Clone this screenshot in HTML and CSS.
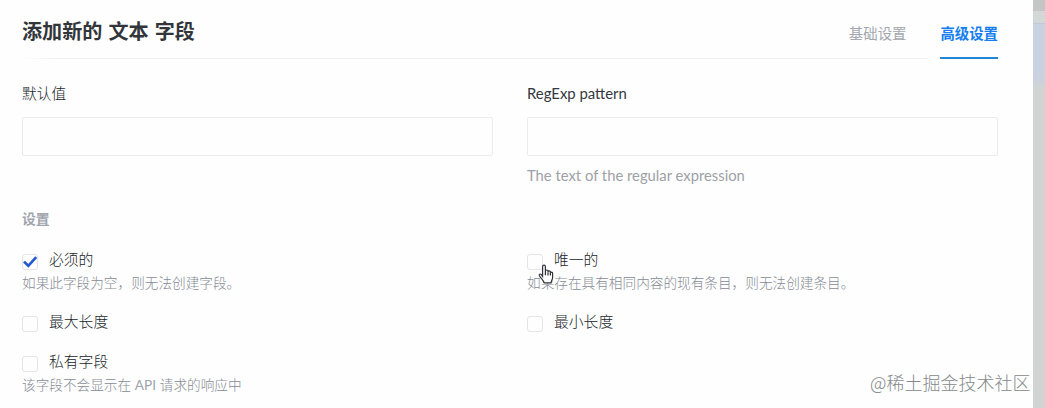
FILE: index.html
```
<!DOCTYPE html>
<html lang="zh-CN">
<head>
    <meta charset="utf-8">
    <title>添加新的 文本 字段</title>
    <link rel="stylesheet" href="styles.css">
</head>
<body>
    <div class="modal">
        <header class="modal-header">
            <h1>添加新的 文本 字段</h1>
            <nav class="tabs">
                <a class="tab">基础设置</a>
                <a class="tab active">高级设置</a>
            </nav>
        </header>

        <form class="fields">
            <div class="field">
                <label for="default" class="cn">默认值</label>
                <input type="text" id="default" autocomplete="off">
            </div>
            <div class="field">
                <label for="regex">RegExp pattern</label>
                <input type="text" id="regex" autocomplete="off">
                <p class="hint">The text of the regular expression</p>
            </div>
        </form>

        <h2>设置</h2>

        <div class="options">
            <div class="option">
                <label><span class="box"><svg viewBox="0 0 16 16"><path d="M2 7.6 L6.3 11.8 L14.2 3.2"/></svg></span><span class="name">必须的</span></label>
                <p>如果此字段为空，则无法创建字段。</p>
            </div>
            <div class="option">
                <label>
                    <span class="box">
                        <svg class="cursor" viewBox="0 0 16 20"><path d="M4.6 12.4V2.5a1.4 1.4 0 0 1 2.8 0V8.1V7.3a1.3 1.3 0 0 1 2.6 0V8.6V8a1.2 1.2 0 0 1 2.4 0V9.3a1.1 1.1 0 0 1 2.2 0V13.5c0 2-1.3 3-1.5 5.4H6.2C5.7 16.4 3 14.6 1.4 11.7c-.6-1.3.8-2.2 1.8-1.3z"/><path d="M7.4 8v3.3M10 8.4v3M12.4 9v2.4"/></svg>
                    </span>
                    <span class="name">唯一的</span>
                </label>
                <p>如果存在具有相同内容的现有条目，则无法创建条目。</p>
            </div>
            <div class="option">
                <label><span class="box"></span><span class="name">最大长度</span></label>
            </div>
            <div class="option">
                <label><span class="box"></span><span class="name">最小长度</span></label>
            </div>
            <div class="option">
                <label><span class="box"></span><span class="name">私有字段</span></label>
                <p>该字段不会显示在 <span class="latin">API</span> 请求的响应中</p>
            </div>
        </div>
    </div>
    <div class="backdrop"></div>
    <div class="watermark">@稀土掘金技术社区</div>
</body>
</html>
```

FILE: styles.css
```
* {box-sizing: border-box;}
body {
    display: flex;
    height: 408px;
    margin: 0;
    overflow: hidden;
    background: #fdfefd;
    color: #333740;
    font-family: Lato, "Noto Sans CJK SC", sans-serif;
}
h1, h2, p {margin: 0;}

/* Modal */
.modal {width: 1033px;padding: 0 35px 0 22px;}
.modal-header {display: flex;justify-content: space-between;height: 59px;background: linear-gradient(90deg, transparent, #f0f1f1 30px 905px, transparent 908px 914px, #f0f1f1 917px) bottom / 100% 1px no-repeat;}
h1 {margin-top: 16px;font-size: 20.1px;line-height: 30px;font-weight: 700;word-spacing: 1.2px;color: #32363a;}
.tabs {display: flex;gap: 34px;}
.tab {height: 59px;padding-top: 24px;font-size: 14.4px;line-height: 20px;color: #a3a7af;}
.tab.active {color: #167ef0;font-weight: 700;border-bottom: 2px solid #2585d5;}

/* Inputs */
.fields {display: grid;grid-template-columns: 1fr 1fr;gap: 34px;height: 149px;padding-top: 23px;}
.field label {display: block;height: 35px;font-size: 14.9px;line-height: 22px;}
.field .cn {font-size: 14.7px;font-weight: 300;color: #20242a;}
.field input {display: block;width: 100%;height: 39px;border: 1px solid #e9ebec;border-radius: 2px;background: #fdfefd;outline: none;}
.hint {margin-top: 8px;font-size: 14.8px;line-height: 22px;color: #9da1a8;}

h2 {margin-top: 1px;font-size: 13.8px;line-height: 20px;font-weight: 700;color: #a0a4ad;}

/* Checkboxes */
.options {display: grid;grid-template-columns: 1fr 1fr;grid-template-rows: 62px 40px 50px;column-gap: 34px;margin-top: 19px;}
.option label {display: flex;gap: 11px;height: 24px;}
.box {position: relative;width: 16px;height: 16px;margin-top: 6px;border: 1px solid #e3e5e6;border-radius: 3px;}
.box svg {display: block;width: 16px;height: 16px;margin: -1px;fill: none;stroke: #2459cf;stroke-width: 2.7;}
.box .cursor {position: absolute;z-index: 1;left: 10px;top: 9px;width: 16px;height: 20px;margin: 0;fill: #fff;stroke: #30343a;stroke-width: 1.2;}
.name {font-size: 14.8px;line-height: 22px;font-weight: 300;color: #20242a;}
.option p {font-size: 13.65px;line-height: 22px;font-weight: 300;color: #868b95;}
.latin {font-weight: 400;color: #a0a4ad;}

/* Page behind the modal */
.backdrop {width: 12px;background: linear-gradient(#c4c6c5 0 11px, #d4d7d7 11px 23px, #bdc8d9 23px 24px, #c8d2e1 24px 75px, #d2d4d3 90px);}
.watermark {position: absolute;left: 870px;top: 370px;font-size: 18px;line-height: 24px;font-weight: 300;color: #85898b;font-family: "Noto Sans CJK SC", sans-serif;}
```
